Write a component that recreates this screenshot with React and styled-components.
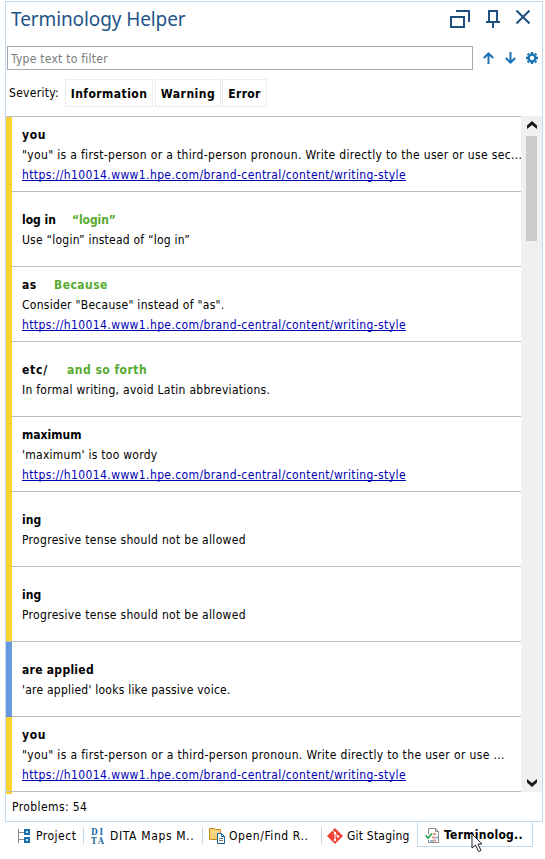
import React from "react";
import styled, { createGlobalStyle } from "styled-components";

const Global = createGlobalStyle`
  * { box-sizing: border-box; }
  body { margin: 0; background: #fff; color: #000; font: 12px/20px "DejaVu Sans Condensed", "DejaVu Sans", sans-serif; font-stretch: condensed; font-variant-ligatures: none; overflow: hidden; }
`;

const Page = styled.div`width: 545px; height: 859px; padding: 1px 2px 0 5px;`;
const Panel = styled.section`
  height: 821px; border: 1px solid #c3d9ec; display: flex; flex-direction: column;
`;
const Header = styled.header`
  height: 44px; display: flex; align-items: flex-start; justify-content: space-between; padding: 5px 12px 0 5px;
`;
const Title = styled.h1`
  margin: 0; font: 400 19px/24px "Noto Sans", "Open Sans", sans-serif; color: #1f5387; letter-spacing: -0.1px; white-space: nowrap;
`;
const HeaderIcons = styled.div`display: flex; gap: 16px; align-items: flex-start; padding-top: 3px;`;
const FilterRow = styled.div`display: flex; height: 24px; padding: 0 4px 0 1px; align-items: center; justify-content: space-between;`;
const FilterInput = styled.input`
  width: 466px; height: 24px; border: 1px solid #a6a6ab; outline: none; padding: 1px 3px 0; font: inherit; letter-spacing: 0.25px; background: #fff;
  &::placeholder { color: #7b7b7b; opacity: 1; }
`;
const FilterIcons = styled.div`display: flex; gap: 10.5px; align-items: center;`;
const SeverityRow = styled.div`display: flex; height: 46px; padding: 9px 0 0 3px; align-items: flex-start;`;
const SeverityLabel = styled.span`width: 56px; line-height: 29px; white-space: nowrap; letter-spacing: 0.3px;`;
const SeverityButton = styled.button`
  width: ${(p) => p.$w}px; height: 28px; margin-right: ${(p) => p.$gap}px; padding: 1px 0 0; border: 1px solid #ececec; background: #fff; color: #000;
  font: inherit; font-weight: 700; letter-spacing: ${(p) => p.$ls}px; white-space: nowrap;
`;
const ListArea = styled.div`display: flex; height: 676px;`;
const List = styled.ul`list-style: none; margin: 0; padding: 0; width: 515px; border-top: 1px solid #bdbdbd;`;
const Item = styled.li`display: flex; height: 75px;`;
const Bar = styled.div`
  width: 6px; background: ${(p) => (p.$info ? "#6699e0" : "#fad232")};
  border-bottom: ${(p) => (p.$ruled ? "1px solid #bdbdbd" : "0")};
`;
const ItemBody = styled.div`
  flex: 1; padding: 1px 0 0 10px; border-bottom: 1px solid #bdbdbd; display: flex; flex-direction: column; justify-content: center; white-space: nowrap;
`;
const Heading = styled.div`display: flex; height: 20px; padding-top: ${(p) => (p.$drop ? 1 : 0)}px; font-weight: 700;`;
const Term = styled.span`letter-spacing: ${(p) => p.$ls || 0}px; width: ${(p) => (p.$w ? p.$w + "px" : "auto")};`;
const Suggestion = styled.span`color: #56ab2f; letter-spacing: ${(p) => p.$ls || 0}px;`;
const Message = styled.div`letter-spacing: ${(p) => p.$ls || 0}px; margin-right: -2px;`;
const Link = styled.a`
  align-self: flex-start; color: #0000b4; letter-spacing: 0.39px; text-decoration: underline; text-underline-offset: 1px;
  text-decoration-thickness: 1px; text-decoration-skip-ink: none;
`;
const Scrollbar = styled.div`
  width: 21px; background: #f0f0f0; display: flex; flex-direction: column; align-items: center; padding: 5px 0;
`;
const Thumb = styled.div`width: 11px; height: 105px; margin: 6px 0 auto; background: #cbcbcb;`;
const BarEnd = styled.div`width: 6px; height: 2px; background: #fad232;`;
const Status = styled.footer`padding: 3px 6px; letter-spacing: 0.4px;`;
const Tabs = styled.nav`display: flex; height: 25px; padding-left: 7px;`;
const Tab = styled.div`
  width: ${(p) => p.$w}px; height: 25px; display: flex; align-items: center; padding: 2px 0 0 ${(p) => p.$pad}px; white-space: nowrap; line-height: 20px;
  letter-spacing: ${(p) => p.$ls}px; font-weight: ${(p) => (p.$active ? 700 : 400)};
  border: ${(p) => (p.$active ? "1px solid #c3d9ec" : "0")}; border-top: 0;
`;
const TabIcon = styled.span`display: flex; width: ${(p) => p.$w}px;`;
const Divider = styled.i`width: 1px; height: 17px; margin-top: 5px; background: #c3d9ec;`;
const Cursor = styled.svg`position: absolute; left: 471px; top: 833px;`;

const LINK = "https://h10014.www1.hpe.com/brand-central/content/writing-style";
const ITEMS = [
  { term: "you", tls: 0.6, text: '"you" is a first-person or a third-person pronoun. Write directly to the user or use sec...', ls: 0.335, link: true },
  { term: "log in", w: 50, hint: "“login”", hls: -0.1, text: "Use “login” instead of “log in”", ls: 0.22 },
  { term: "as", tls: 0.5, w: 32, hint: "Because", hls: 0.45, text: 'Consider "Because" instead of "as".', ls: 0.28, link: true },
  { term: "etc/", tls: 0.8, w: 45, hint: "and so forth", hls: 0.48, text: "In formal writing, avoid Latin abbreviations.", ls: 0.28 },
  { term: "maximum", text: "'maximum' is too wordy", ls: 0.27, link: true },
  { term: "ing", text: "Progresive tense should not be allowed", ls: 0.31 },
  { term: "ing", text: "Progresive tense should not be allowed", ls: 0.31, ruled: true },
  { term: "are applied", tls: 0.28, text: "'are applied' looks like passive voice.", ls: 0.23, info: true },
  { term: "you", tls: 0.6, text: '"you" is a first-person or a third-person pronoun. Write directly to the user or use ...', ls: 0.355, link: true, ruled: true },
];

const RestoreIcon = () => (
  <svg width="20" height="18" fill="none" stroke="#1f5080" strokeWidth="2"><path d="M6 1h13v11M1 7h13v10H1z" /></svg>
);
const PinIcon = () => (
  <svg width="14" height="18" fill="none" stroke="#1f5080" strokeWidth="2"><path d="M3 11V1h8v10M0 12h14M7 12v6" /></svg>
);
const CloseIcon = () => (
  <svg width="14" height="14" fill="none" stroke="#1f5080" strokeWidth="2"><path d="M.5.5l13 13M13.5.5l-13 13" /></svg>
);
const ArrowIcon = ({ down }) => (
  <svg width="11" height="12" fill="none" stroke="#1d72b4" strokeWidth="2">
    <path d={down ? "M5.500 0v10M.8 6l4.700 4.500L10.200 6" : "M5.500 12V2M.8 6l4.700-4.500L10.200 6"} />
  </svg>
);
const GearIcon = () => (
  <svg width="12" height="12" fill="none" stroke="#1d72b4">
    <circle cx="6" cy="6" r="3.4" strokeWidth="2.4" />
    <path strokeWidth="2.4" d="M6 0v2M6 10v2M0 6h2M10 6h2M1.6 1.6l1.3 1.3M9.1 9.1l1.3 1.3M1.6 10.4l1.3-1.3M9.1 2.9l1.3-1.3" />
  </svg>
);
const Chevron = ({ down }) => (
  <svg width="10" height="9" fill="#1a1a1a"><path d={down ? "M0 1l5 4 5-4v3.500L5 9 0 4.500z" : "M0 8l5-4 5 4V4.500L5 0 0 4.500z"} /></svg>
);
const ProjectIcon = () => (
  <svg width="13" height="14" fill="none"><path d="M.5 0v14M0 3.5h6M0 10.5h6" stroke="#8a8a8a" /><path d="M7 1h4v4H7zM7 9h4v4H7z" fill="#cfe6f7" stroke="#1e70ad" strokeWidth="2" /></svg>
);
const DitaIcon = () => (
  <svg width="15" height="18" fill="#1a6ba5" fontFamily="DejaVu Serif, serif" fontWeight="700" fontSize="8.5" letterSpacing="0">
    <text x="0" y="7.500">D</text><text x="8.500" y="7.500">I</text><text x="0" y="17">T</text><text x="7" y="17">A</text>
  </svg>
);
const FolderIcon = () => (
  <svg width="17" height="16">
    <path d="M.5 11.500V.5h5l1 1h5v10z" fill="#f5cf75" stroke="#c58c16" /><path d="M2 4h9" stroke="#fae4a7" />
    <path d="M8.500 5.500h4l3 3v7h-7z" fill="#fff" stroke="#16639b" /><path d="M12.500 5.500v3h3" fill="none" stroke="#16639b" /><path d="M10 10.500h4M10 12.500h4" stroke="#777" />
  </svg>
);
const GitIcon = () => (
  <svg width="16" height="16"><path d="M8 0l8 8-8 8-8-8z" fill="#ee4335" /><path d="M5.500 2.500L8 5v7M8 5.500l3 3" stroke="#fff" fill="none" /><circle cx="8" cy="5" r="1.200" fill="#fff" /><circle cx="8" cy="12" r="1.200" fill="#fff" /><circle cx="11" cy="8.500" r="1.200" fill="#fff" /></svg>
);
const CheckDocIcon = () => (
  <svg width="15" height="15" fill="none">
    <path d="M3.500 6V.5h7l3 3v11h-10V12" stroke="#8a8a8a" /><path d="M10.500.5v3h3" stroke="#8a8a8a" />
    <path d="M.7 7.500l2.300 2.500 4-4.500" stroke="#2fa04a" strokeWidth="1.800" />
    <path d="M8 6h3M7 9.500h3" stroke="#e39a8e" strokeWidth="2" /><path d="M10 9.500h3M5 13h3" stroke="#91bddb" strokeWidth="2" /><path d="M8 12.500h3" stroke="#e39a8e" strokeWidth="2" />
  </svg>
);

export default function App() {
  return (
    <Page>
      <Global />
      <Panel>
        <Header>
          <Title>Terminology Helper</Title>
          <HeaderIcons><RestoreIcon /><PinIcon /><CloseIcon /></HeaderIcons>
        </Header>
        <FilterRow>
          <FilterInput placeholder="Type text to filter" />
          <FilterIcons><ArrowIcon /><ArrowIcon down /><GearIcon /></FilterIcons>
        </FilterRow>
        <SeverityRow>
          <SeverityLabel>Severity:</SeverityLabel>
          <SeverityButton $w={88} $gap={2} $ls={0.45}>Information</SeverityButton>
          <SeverityButton $w={66} $gap={1} $ls={0.5}>Warning</SeverityButton>
          <SeverityButton $w={45} $gap={0} $ls={0.35}>Error</SeverityButton>
        </SeverityRow>
        <ListArea>
          <List>
            {ITEMS.map((item, i) => (
              <Item key={i}>
                <Bar $info={item.info} $ruled={item.ruled} />
                <ItemBody>
                  <Heading>
                    <Term $w={item.w} $ls={item.tls}>{item.term}</Term>
                    {item.hint && <Suggestion $ls={item.hls}>{item.hint}</Suggestion>}
                  </Heading>
                  <Message $ls={item.ls}>{item.text}</Message>
                  {item.link && <Link>{LINK}</Link>}
                </ItemBody>
              </Item>
            ))}
          </List>
          <Scrollbar><Chevron /><Thumb /><Chevron down /></Scrollbar>
        </ListArea>
        <BarEnd />
        <Status>Problems: 54</Status>
      </Panel>
      <Tabs>
        <Tab $w={71} $pad={6} $ls={0.5}><TabIcon $w={18}><ProjectIcon /></TabIcon>Project</Tab>
        <Divider />
        <Tab $w={118} $pad={7} $ls={0.65}><TabIcon $w={19}><DitaIcon /></TabIcon>DITA Maps M..</Tab>
        <Divider />
        <Tab $w={118} $pad={6} $ls={0.58}><TabIcon $w={20}><FolderIcon /></TabIcon>Open/Find R..</Tab>
        <Divider />
        <Tab $w={95} $pad={5} $ls={0.2}><TabIcon $w={20}><GitIcon /></TabIcon>Git Staging</Tab>
        <Tab $w={116} $pad={7} $ls={0.28} $active><TabIcon $w={19}><CheckDocIcon /></TabIcon>Terminolog..</Tab>
      </Tabs>
      <Cursor width="13" height="20"><path d="M1 1v14l3.500-3 3 6.500 2.500-1-3-6.500H11z" fill="#fff" stroke="#20242e" /></Cursor>
    </Page>
  );
}
